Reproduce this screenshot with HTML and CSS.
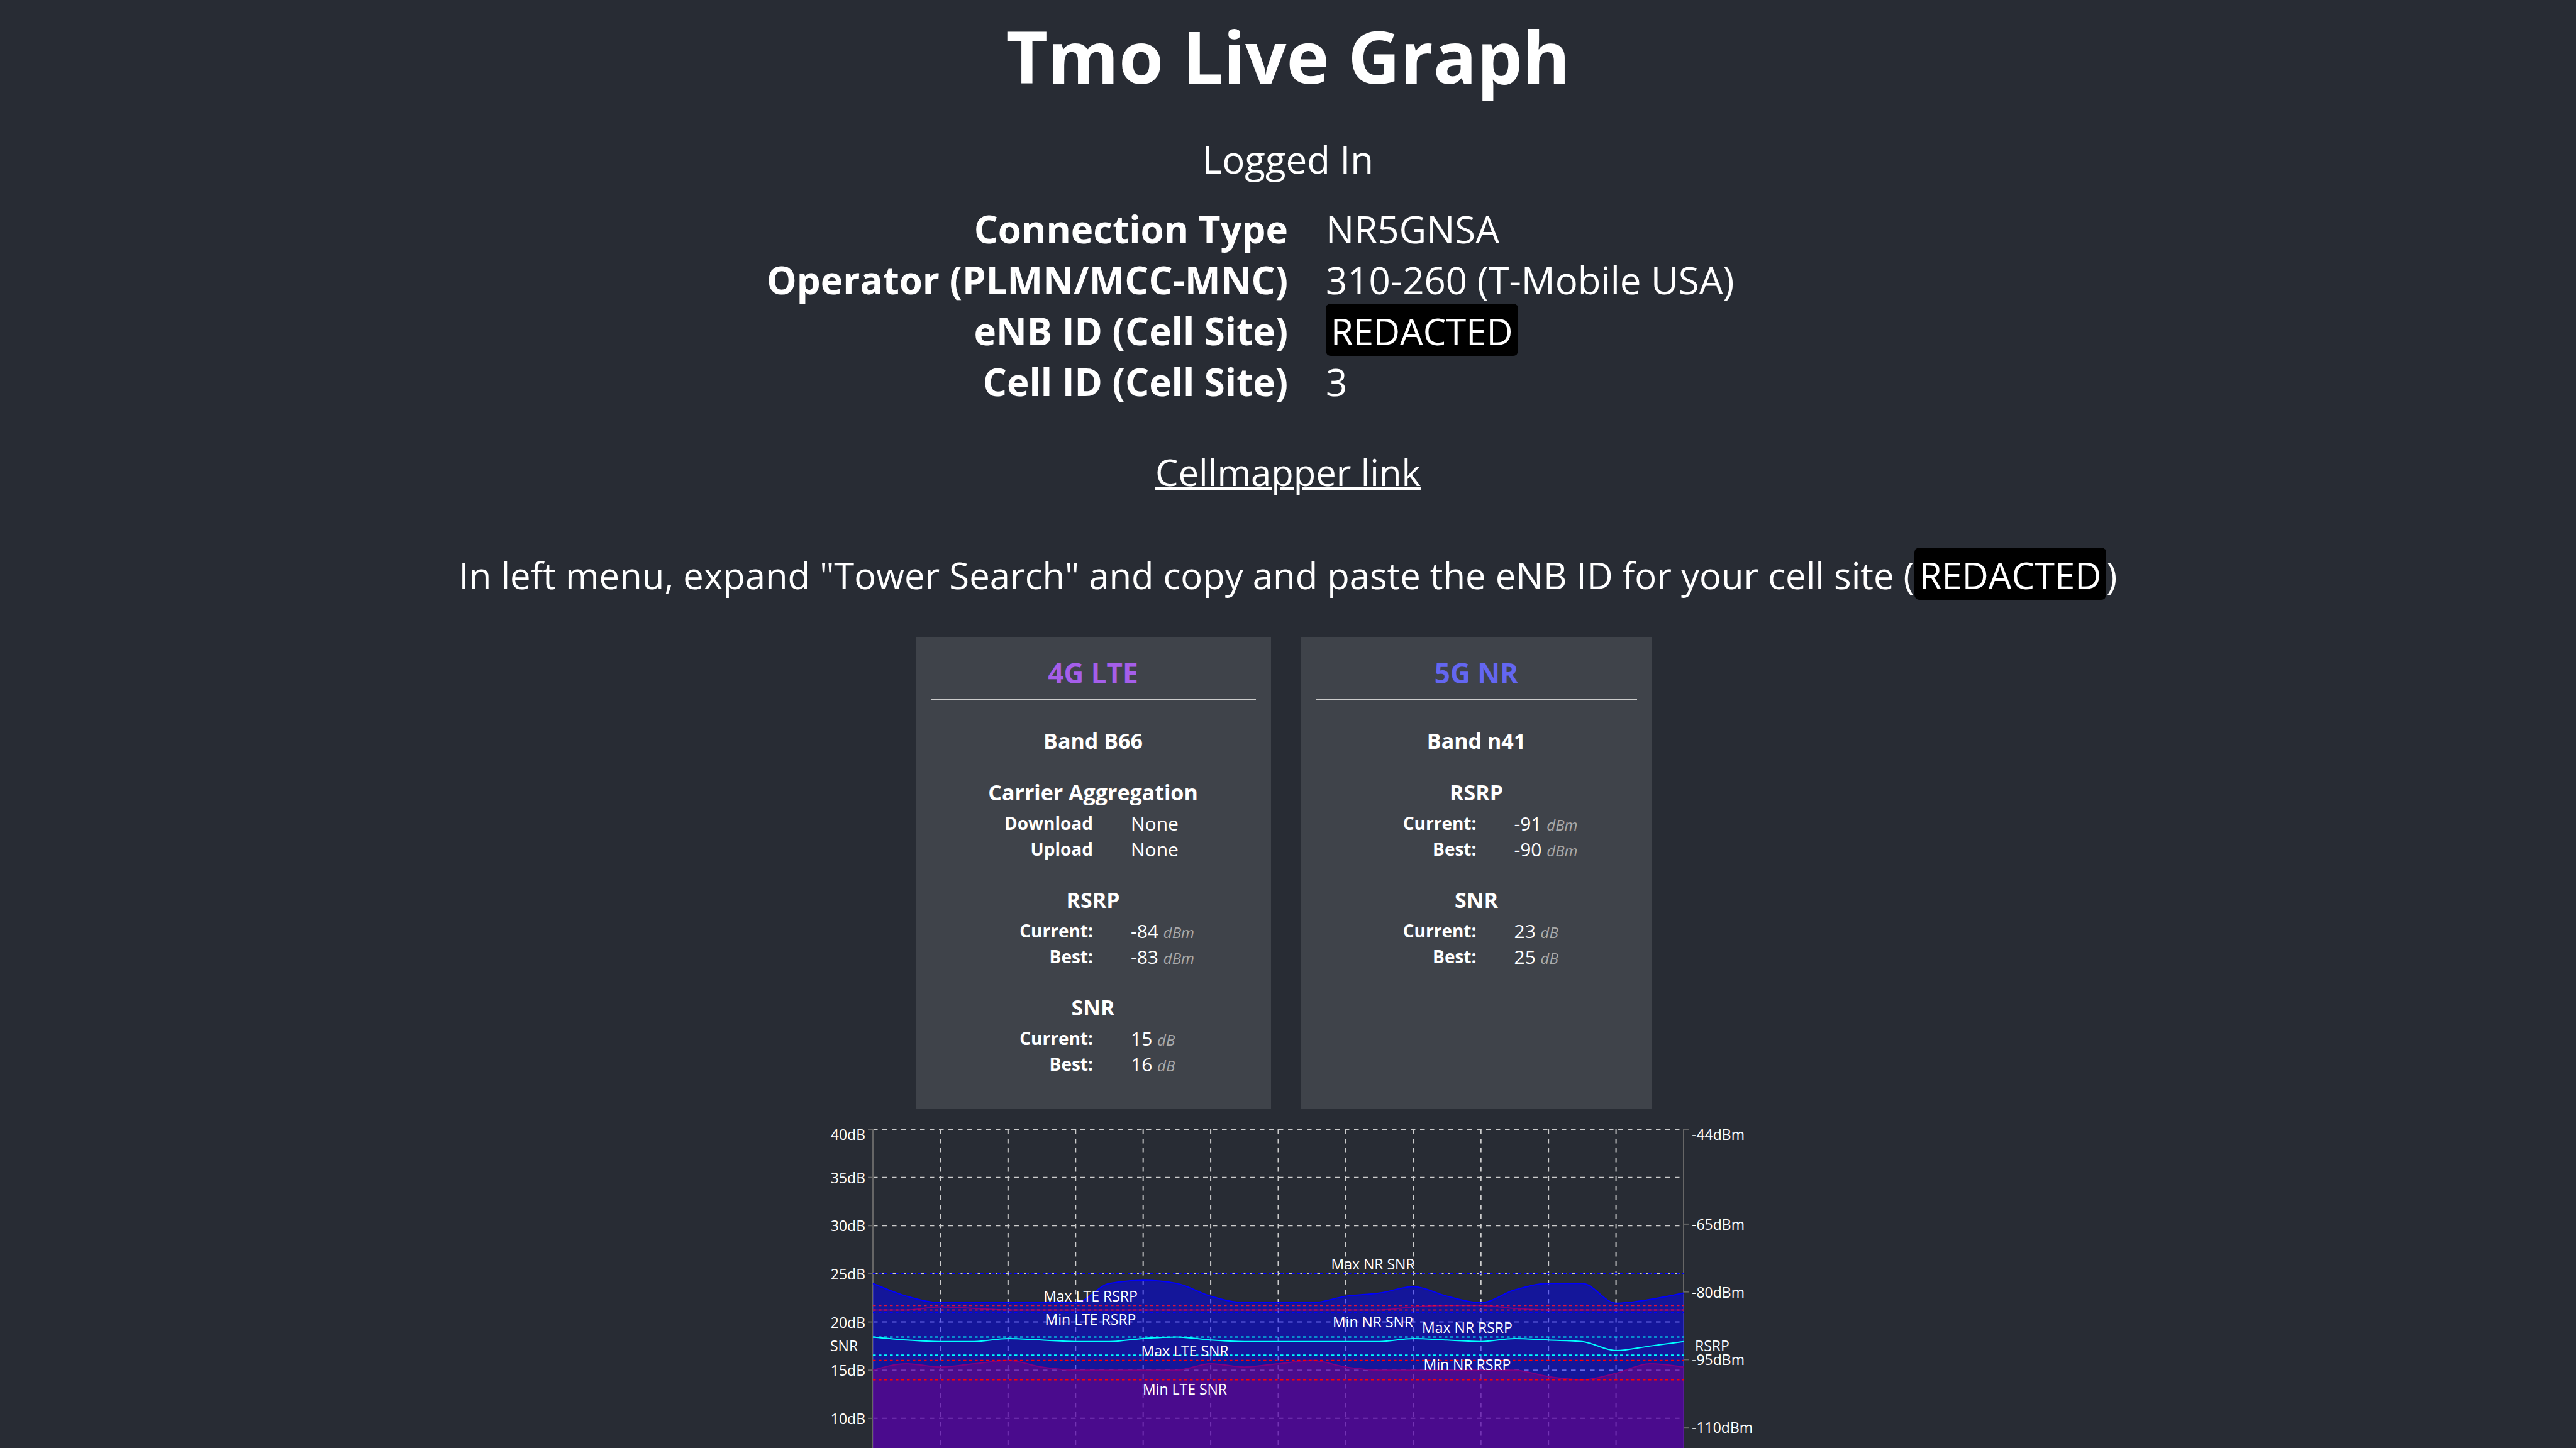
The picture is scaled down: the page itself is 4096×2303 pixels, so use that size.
FILE: index.html
```html
<!DOCTYPE html>
<html lang="en">
<head>
<meta charset="utf-8">
<title>Tmo Live Graph</title>
<link rel="stylesheet" href="styles.css">
</head>
<body>
<main class="app">
  <h1 class="title">Tmo Live Graph</h1>
  <p class="status">Logged In</p>

  <table class="info">
    <tbody>
      <tr><th scope="row">Connection Type</th><td>NR5GNSA</td></tr>
      <tr><th scope="row">Operator (PLMN/MCC-MNC)</th><td>310-260 (T-Mobile USA)</td></tr>
      <tr><th scope="row">eNB ID (Cell Site)</th><td><span class="redacted">REDACTED</span></td></tr>
      <tr><th scope="row">Cell ID (Cell Site)</th><td>3</td></tr>
    </tbody>
  </table>

  <p class="mapper"><a class="link" href="https://www.cellmapper.net/map">Cellmapper link</a></p>
  <p class="hint">In left menu, expand "Tower Search" and copy and paste the eNB ID for your cell site (<span class="redacted">REDACTED</span>)</p>

  <div class="cards">
    <section class="card card-lte">
      <h2 class="card-title lte">4G LTE</h2>
      <h3 class="band">Band B66</h3>
      <h3 class="metric">Carrier Aggregation</h3>
      <table class="stats">
        <tbody>
          <tr><th scope="row">Download</th><td>None</td></tr>
          <tr><th scope="row">Upload</th><td>None</td></tr>
        </tbody>
      </table>
      <h3 class="metric">RSRP</h3>
      <table class="stats">
        <tbody>
          <tr><th scope="row">Current:</th><td>-84 <span class="unit">dBm</span></td></tr>
          <tr><th scope="row">Best:</th><td>-83 <span class="unit">dBm</span></td></tr>
        </tbody>
      </table>
      <h3 class="metric">SNR</h3>
      <table class="stats">
        <tbody>
          <tr><th scope="row">Current:</th><td>15 <span class="unit">dB</span></td></tr>
          <tr><th scope="row">Best:</th><td>16 <span class="unit">dB</span></td></tr>
        </tbody>
      </table>
    </section>

    <section class="card card-nr">
      <h2 class="card-title nr">5G NR</h2>
      <h3 class="band">Band n41</h3>
      <h3 class="metric">RSRP</h3>
      <table class="stats">
        <tbody>
          <tr><th scope="row">Current:</th><td>-91 <span class="unit">dBm</span></td></tr>
          <tr><th scope="row">Best:</th><td>-90 <span class="unit">dBm</span></td></tr>
        </tbody>
      </table>
      <h3 class="metric">SNR</h3>
      <table class="stats">
        <tbody>
          <tr><th scope="row">Current:</th><td>23 <span class="unit">dB</span></td></tr>
          <tr><th scope="row">Best:</th><td>25 <span class="unit">dB</span></td></tr>
        </tbody>
      </table>
    </section>
  </div>

  <div class="chart-area">
    <svg id="chart" class="chart" role="img" aria-label="Signal history"></svg>
  </div>
</main>
<script src="chart.js"></script>
</body>
</html>
```
FILE: styles.css
```css
* {
  box-sizing: border-box;
}

body {
  margin: 0;
  background: #282c34;
  color: #fff;
  font-family: "Open Sans", "Noto Sans", sans-serif;
}

.app {
  display: flex;
  flex-direction: column;
  height: 100vh;
  overflow: hidden;
  font-size: 58px;
  line-height: 81px;
  text-align: center;
}

.title {
  margin: 0;
  padding: 8px 0 11px;
  font-size: 115px;
  line-height: 162px;
}

.status {
  margin: 0;
  padding: 32px 0 30px;
  font-size: 60px;
}

table {
  width: 100%;
  border-collapse: collapse;
  table-layout: fixed;
}

th,
td {
  width: 50%;
  padding: 0;
}

th {
  text-align: right;
}

td {
  padding-left: 60px;
  text-align: left;
}

.info {
  font-size: 60px;
}

.redacted {
  padding: 4px 8px 0;
  border-radius: 8px;
  background: #000;
  font-size: 58px;
}

.mapper {
  margin: 62px 0 0;
}

.link {
  color: #fff;
  text-decoration-thickness: 4px;
}

.hint {
  margin: 83px 0 0;
}

.cards {
  display: flex;
  justify-content: center;
  gap: 48px;
  padding-right: 14px;
  margin-top: 58px;
}

.card {
  padding: 24px 24px 49px;
  background: #3f434a;
}

.card-lte {
  width: 565px;
}

.card-nr {
  width: 558px;
}

.card-title {
  margin: 0 0 41px;
  padding-bottom: 8px;
  border-bottom: 2px solid #ccc;
  font-size: 44px;
  line-height: 66px;
}

.lte {
  color: #a55eea;
}

.nr {
  color: #6366f1;
}

.band,
.metric {
  margin: 0;
  font-size: 34px;
  line-height: 48px;
}

.metric {
  padding-top: 34px;
}

.stats {
  margin: 5px 0 2px;
  font-size: 28px;
  line-height: 41px;
}

.stats td {
  font-size: 30px;
}

.unit {
  color: #aaa;
  font-size: 24px;
  font-style: italic;
  line-height: 1;
}

.chart-area {
  flex: 1;
  min-height: 0;
}

.chart {
  display: block;
  width: 1500px;
  height: 100%;
  margin: 0 auto;
}

.chart text {
  fill: #fff;
  font-size: 23px;
}

.grid {
  stroke: #ccc;
  stroke-width: 2;
  stroke-dasharray: 7.5 7.5;
}

.axis {
  stroke: #666;
  stroke-width: 2;
}

.limit {
  stroke-width: 2;
  stroke-dasharray: 4.5 4.5;
}

.curve {
  fill: none;
  stroke-width: 2;
}

.area {
  fill-opacity: 0.5;
}

.start {
  text-anchor: start;
}

.middle {
  text-anchor: middle;
}

.end {
  text-anchor: end;
}
```
FILE: chart.js
```js
const svg = document.getElementById("chart");
const left = 90;
const right = 1379;
const top40 = 32;
const step = (right - left) / 24;

const snrY = (db) => top40 + (40 - db) * 15.328;
const rsrpY = (dbm) => top40 + (-44 - dbm) * 7.185;

const nrSnr = [24, 22.67, 22, 22, 22, 22, 22, 24, 24.33, 24, 22.67, 22, 22, 22, 22.67, 23, 23.67, 22.67, 22, 23.33, 24, 24, 21.95, 22.33, 23];
const lteSnr = [15, 15.67, 15.33, 15.67, 16, 15.33, 15, 15, 15, 15, 15.67, 15.33, 15.67, 16, 15.33, 15, 15, 15, 15, 15, 14.33, 14, 14.67, 15.67, 15.33];
const nrRsrp = [-90, -90.67, -91, -91, -90.33, -90.67, -91, -91, -90.33, -90, -90.67, -91, -91, -91, -91, -91, -90.33, -90.67, -91, -90.33, -90.67, -91, -93, -92, -91];
const lteRsrp = [-84, -84, -83.33, -83.67, -84, -84, -84, -84, -84, -84, -84, -84, -84, -84, -84, -84, -83.33, -83, -83, -83.67, -84, -84, -84, -84, -84];

function add(tag, attrs, text) {
  const el = document.createElementNS("http://www.w3.org/2000/svg", tag);
  for (const name in attrs) el.setAttribute(name, attrs[name]);
  if (text) el.textContent = text;
  svg.appendChild(el);
}

function line(x1, y1, x2, y2, cls, stroke) {
  const attrs = { x1, y1, x2, y2, class: cls };
  if (stroke) attrs.stroke = stroke;
  add("line", attrs);
}

function label(x, y, cls, text) {
  add("text", { x, y, class: cls }, text);
}

// Monotone cubic interpolation through evenly spaced samples.
function curvePath(values, scale) {
  const ys = values.map(scale);
  const n = ys.length;
  const slope = (i) => (ys[i + 1] - ys[i]) / step;
  const tangents = ys.map((y, i) => {
    if (i === 0 || i === n - 1) return null;
    const a = slope(i - 1);
    const b = slope(i);
    if (a * b <= 0) return 0;
    return Math.sign(a) * Math.min(Math.abs(a), Math.abs(b), Math.abs(a + b) / 4) * 2;
  });
  tangents[0] = (3 * slope(0) - tangents[1]) / 2;
  tangents[n - 1] = (3 * slope(n - 2) - tangents[n - 2]) / 2;
  let d = `M${left},${ys[0]}`;
  for (let i = 0; i < n - 1; i++) {
    const x = left + i * step;
    const third = step / 3;
    d += `C${x + third},${ys[i] + tangents[i] * third} ${x + 2 * third},${ys[i + 1] - tangents[i + 1] * third} ${x + step},${ys[i + 1]}`;
  }
  return d;
}

function series(values, scale, color, filled) {
  const d = curvePath(values, scale);
  if (filled) add("path", { d: `${d}V${snrY(0)}H${left}Z`, fill: color, class: "area" });
  add("path", { d, stroke: color, class: "curve" });
}

for (let db = 40; db > 5; db -= 5) line(left, snrY(db), right, snrY(db), "grid");
for (let i = 1; i < 12; i++) line(left + i * 2 * step, top40, left + i * 2 * step, snrY(0), "grid");

for (let db = 40; db > 5; db -= 5) {
  line(left - 8, snrY(db), left, snrY(db), "axis");
  label(left - 12, snrY(db) + (db === 40 ? 17 : 9), "end", `${db}dB`);
}
for (const dbm of [-44, -65, -80, -95, -110]) {
  line(right, rsrpY(dbm), right + 8, rsrpY(dbm), "axis");
  label(right + 13, rsrpY(dbm) + (dbm === -44 ? 17 : 9), "start", `${dbm}dBm`);
}
line(left, top40, left, snrY(0), "axis");
line(right, top40, right, snrY(0), "axis");
label(22, 385, "start", "SNR");
label(1397, 385, "start", "RSRP");

series(nrSnr, snrY, "blue", true);
series(lteSnr, snrY, "purple", true);
series(lteRsrp, rsrpY, "purple", false);
series(nrRsrp, rsrpY, "cyan", false);

for (const [y, color] of [
  [snrY(25), "blue"],
  [snrY(21), "blue"],
  [snrY(16), "red"],
  [snrY(14), "red"],
  [rsrpY(-83), "crimson"],
  [rsrpY(-84), "crimson"],
  [rsrpY(-90), "cyan"],
  [rsrpY(-94), "cyan"],
]) line(left, y, right, y, "limit", color);

label(436, 306, "middle", "Max LTE RSRP");
label(436, 343, "middle", "Min LTE RSRP");
label(586, 393, "middle", "Max LTE SNR");
label(586, 454, "middle", "Min LTE SNR");
label(885, 255, "middle", "Max NR SNR");
label(885, 347, "middle", "Min NR SNR");
label(1035, 356, "middle", "Max NR RSRP");
label(1035, 415, "middle", "Min NR RSRP");
```
